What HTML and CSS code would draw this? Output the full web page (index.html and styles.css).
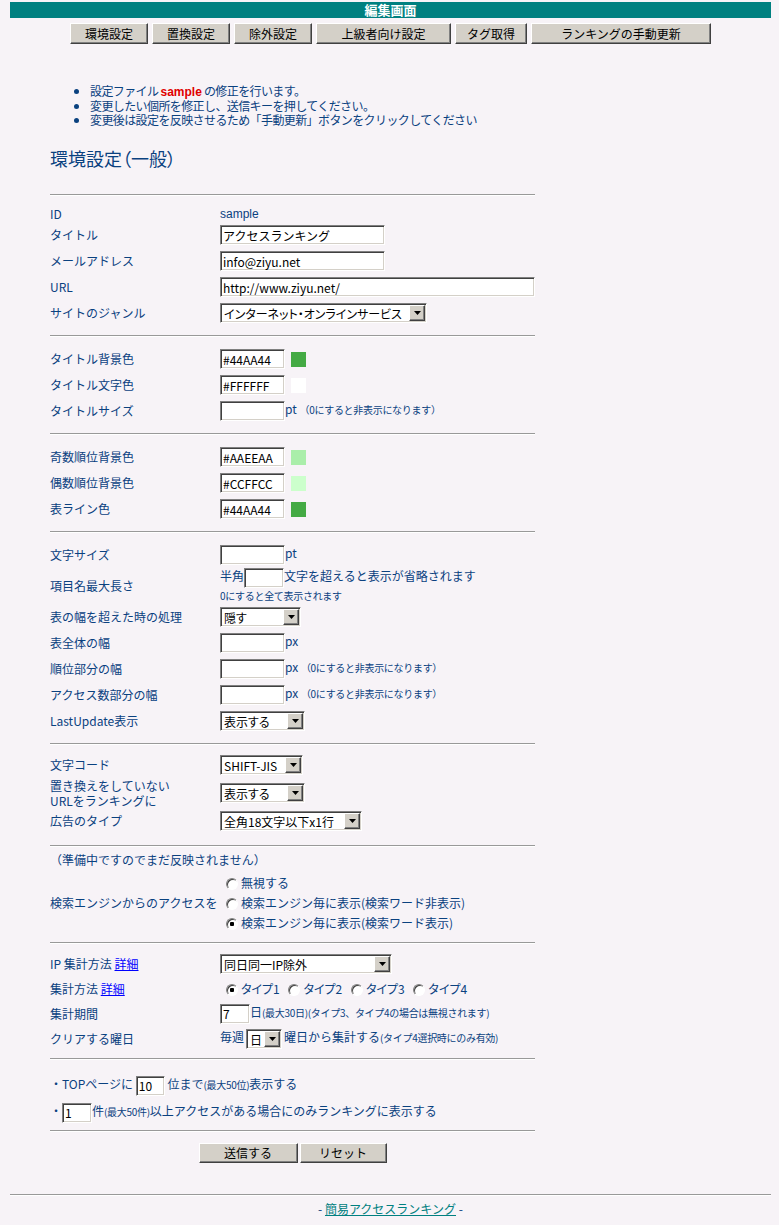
FILE: index.html
```html
<!DOCTYPE html>
<html lang="ja">
<head>
  <meta charset="UTF-8">
  <title>編集画面</title>
  <link rel="stylesheet" href="styles.css">
</head>
<body>

  <!-- タイトルバー -->
  <div class="titlebar">編集画面</div>

  <!-- メニュー -->
  <div class="tabs">
    <button class="btn">環境設定</button>
    <button class="btn">置換設定</button>
    <button class="btn">除外設定</button>
    <button class="btn">上級者向け設定</button>
    <button class="btn">タグ取得</button>
    <button class="btn">ランキングの手動更新</button>
  </div>

  <div class="main">
    <ul class="info">
      <li>設定ファイル <b class="fname">sample</b> の修正を行います。</li>
      <li>変更したい個所を修正し、送信キーを押してください。</li>
      <li>変更後は設定を反映させるため「手動更新」ボタンをクリックしてください</li>
    </ul>

    <h2>環境設定（一般）</h2>

    <form>
      <hr class="sep">
      <div class="sec">
        <table class="form">
          <tr class="h17"><td class="label">ID</td><td><span class="idval">sample</span></td></tr>
          <tr><td class="label">タイトル</td><td><input class="in in-text" type="text" value="アクセスランキング"></td></tr>
          <tr><td class="label">メールアドレス</td><td><input class="in in-text" type="text" value="info@ziyu.net"></td></tr>
          <tr><td class="label">URL</td><td><input class="in in-url" type="text" value="http://www.ziyu.net/"></td></tr>
          <tr><td class="label">サイトのジャンル</td><td>
            <span class="sel sel-genre"><select><option>インターネット・オンラインサービス</option></select><span class="arr"><svg width="7" height="4" viewBox="0 0 7 4"><path d="M0 0h7L3.5 4z" fill="#000"/></svg></span></span>
          </td></tr>
        </table>
      </div>

      <hr class="sep">
      <div class="sec">
        <table class="form">
          <tr><td class="label">タイトル背景色</td><td><input class="in in-color" type="text" value="#44AA44"><span class="swatch sw-green"></span></td></tr>
          <tr><td class="label">タイトル文字色</td><td><input class="in in-color" type="text" value="#FFFFFF"><span class="swatch sw-white"></span></td></tr>
          <tr><td class="label">タイトルサイズ</td><td><input class="in in-color" type="text">pt <span class="note">（0にすると非表示になります）</span></td></tr>
        </table>
      </div>

      <hr class="sep">
      <div class="sec">
        <table class="form">
          <tr><td class="label">奇数順位背景色</td><td><input class="in in-color" type="text" value="#AAEEAA"><span class="swatch sw-odd"></span></td></tr>
          <tr><td class="label">偶数順位背景色</td><td><input class="in in-color" type="text" value="#CCFFCC"><span class="swatch sw-even"></span></td></tr>
          <tr><td class="label">表ライン色</td><td><input class="in in-color" type="text" value="#44AA44"><span class="swatch sw-green"></span></td></tr>
        </table>
      </div>

      <hr class="sep">
      <div class="sec">
        <table class="form">
          <tr><td class="label">文字サイズ</td><td><input class="in in-color" type="text">pt</td></tr>
          <tr class="h36"><td class="label">項目名最大長さ</td><td>
            <div>半角<input class="in in-short" type="text">文字を超えると表示が省略されます</div>
            <div class="note">0にすると全て表示されます</div>
          </td></tr>
          <tr><td class="label">表の幅を超えた時の処理</td><td>
            <span class="sel sel-hide"><select><option>隠す</option></select><span class="arr"><svg width="7" height="4" viewBox="0 0 7 4"><path d="M0 0h7L3.5 4z" fill="#000"/></svg></span></span>
          </td></tr>
          <tr><td class="label">表全体の幅</td><td><input class="in in-color" type="text">px</td></tr>
          <tr><td class="label">順位部分の幅</td><td><input class="in in-color" type="text">px <span class="note">（0にすると非表示になります）</span></td></tr>
          <tr><td class="label">アクセス数部分の幅</td><td><input class="in in-color" type="text">px <span class="note">（0にすると非表示になります）</span></td></tr>
          <tr><td class="label">LastUpdate表示</td><td>
            <span class="sel sel-show"><select><option>表示する</option></select><span class="arr"><svg width="7" height="4" viewBox="0 0 7 4"><path d="M0 0h7L3.5 4z" fill="#000"/></svg></span></span>
          </td></tr>
        </table>
      </div>

      <hr class="sep">
      <div class="sec sec-code">
        <table class="form">
          <tr><td class="label">文字コード</td><td>
            <span class="sel sel-code"><select><option>SHIFT-JIS</option></select><span class="arr"><svg width="7" height="4" viewBox="0 0 7 4"><path d="M0 0h7L3.5 4z" fill="#000"/></svg></span></span>
          </td></tr>
          <tr class="h28"><td class="label two">置き換えをしていない<br>URLをランキングに</td><td>
            <span class="sel sel-show"><select><option>表示する</option></select><span class="arr"><svg width="7" height="4" viewBox="0 0 7 4"><path d="M0 0h7L3.5 4z" fill="#000"/></svg></span></span>
          </td></tr>
          <tr><td class="label">広告のタイプ</td><td>
            <span class="sel sel-ad"><select><option>全角18文字以下x1行</option></select><span class="arr"><svg width="7" height="4" viewBox="0 0 7 4"><path d="M0 0h7L3.5 4z" fill="#000"/></svg></span></span>
          </td></tr>
        </table>
      </div>

      <hr class="sep">
      <div class="sec sec-engine">
        <div class="pending">（準備中ですのでまだ反映されません）</div>
        <table class="form engine">
          <tr><td class="label" rowspan="3">検索エンジンからのアクセスを</td>
            <td><label><input class="radio" type="radio" name="engine">無視する</label></td></tr>
          <tr><td><label><input class="radio" type="radio" name="engine">検索エンジン毎に表示(検索ワード非表示)</label></td></tr>
          <tr><td><label><input class="radio" type="radio" name="engine" checked>検索エンジン毎に表示(検索ワード表示)</label></td></tr>
        </table>
      </div>

      <hr class="sep">
      <div class="sec sec-count">
        <table class="form">
          <tr><td class="label">IP 集計方法 <a href="#">詳細</a></td><td>
            <span class="sel sel-ip"><select><option>同日同一IP除外</option></select><span class="arr"><svg width="7" height="4" viewBox="0 0 7 4"><path d="M0 0h7L3.5 4z" fill="#000"/></svg></span></span>
          </td></tr>
          <tr><td class="label">集計方法 <a href="#">詳細</a></td><td class="types">
            <label><input class="radio" type="radio" name="type" checked>タイプ1</label>
            <label><input class="radio" type="radio" name="type">タイプ2</label>
            <label><input class="radio" type="radio" name="type">タイプ3</label>
            <label><input class="radio" type="radio" name="type">タイプ4</label>
          </td></tr>
          <tr><td class="label">集計期間</td><td><input class="in in-day" type="text" value="7">日<span class="note">(最大30日)(タイプ3、タイプ4の場合は無視されます)</span></td></tr>
          <tr><td class="label">クリアする曜日</td><td>毎週<span class="sel sel-day"><select><option>日</option></select><span class="arr"><svg width="7" height="4" viewBox="0 0 7 4"><path d="M0 0h7L3.5 4z" fill="#000"/></svg></span></span>曜日から集計する<span class="note">(タイプ4選択時にのみ有効)</span></td></tr>
        </table>
      </div>

      <hr class="sep">
      <div class="sec sec-top">
        <div class="line">・TOPページに <input class="in in-top" type="text" value="10"> 位まで<span class="note">(最大50位)</span>表示する</div>
        <div class="line">・<input class="in in-min" type="text" value="1">件<span class="note">(最大50件)</span>以上アクセスがある場合にのみランキングに表示する</div>
      </div>

      <hr class="sep">
      <div class="actions">
        <button class="btn btn-send" type="submit">送信する</button>
        <button class="btn btn-reset" type="reset">リセット</button>
      </div>
    </form>
  </div>

  <!-- フッター -->
  <hr class="sep">
  <p class="footer">- <a href="#">簡易アクセスランキング</a> -</p>

</body>
</html>
```

FILE: styles.css
```css
body {
  margin: 2px 8px 0 10px;
  background-color: #f7f3f7;
  color: #0a417f;
  font-family: "Noto Sans CJK JP", sans-serif;
  font-size: 12px;
}

.titlebar {
  background-color: #008080;
  color: #fff;
  font-weight: bold;
  font-size: 13px;
  text-align: center;
  height: 16px;
  line-height: 16px;
}

.tabs {
  display: flex;
  justify-content: center;
  gap: 4px;
  margin-top: 5px;
}

.btn {
  height: 21px;
  padding: 0;
  background-color: #d4d0c8;
  border: 1px solid;
  border-color: #fff #404040 #404040 #fff;
  box-shadow: inset -1px -1px #808080;
  color: #000;
  font-family: "Noto Sans CJK JP", sans-serif;
  font-size: 12px;
  line-height: 17px;
  cursor: pointer;
}

.tabs .btn:nth-child(1),
.tabs .btn:nth-child(2),
.tabs .btn:nth-child(3) { width: 78px; }
.tabs .btn:nth-child(4) { width: 135px; }
.tabs .btn:nth-child(5) { width: 72px; }
.tabs .btn:nth-child(6) { width: 180px; }

.main {
  margin-left: 40px;
  width: 485px;
}

.info {
  margin: 40px 0 0;
  padding-left: 40px;
  line-height: 14px;
  letter-spacing: -0.6px;
}

.fname {
  color: #e00000;
  font-family: "Liberation Sans", sans-serif;
  letter-spacing: 0;
}

h2 {
  margin: 19px 0 24px;
  font-size: 18px;
  font-weight: normal;
  line-height: 24px;
  font-feature-settings: "palt";
}

hr.sep {
  margin: 0;
  height: 0;
  border: none;
  border-top: 1px solid #999;
  border-bottom: 1px solid #fff;
}

.sec {
  padding: 9px 0;
}

.form {
  border-collapse: collapse;
  width: 100%;
}

.form tr { height: 26px; }
.form tr.h17 { height: 17px; }
.form tr.h28 { height: 28px; }
.form tr.h36 { height: 36px; }

.form td {
  padding: 0;
  vertical-align: middle;
  line-height: 16px;
  white-space: nowrap;
}

.form td.label {
  width: 170px;
}

.form td.two {
  line-height: 15px;
}

.idval {
  font-family: "Liberation Sans", sans-serif;
  font-size: 12px;
}

.note {
  font-size: 10px;
  letter-spacing: -0.3px;
}

.in {
  box-sizing: border-box;
  height: 20px;
  margin: 0;
  padding: 0 2px;
  vertical-align: middle;
  background: #fff;
  border: 1px solid;
  border-color: #808080 #fff #fff #808080;
  box-shadow: inset 1px 1px #404040, inset -1px -1px #d4d0c8;
  color: #000;
  font-family: "Noto Sans CJK JP", sans-serif;
  font-size: 12px;
  outline: none;
}

.in-text { width: 165px; }
.in-url { width: 315px; }
.in-color { width: 65px; }
.in-short { width: 40px; }
.in-day { width: 30px; }
.in-top { width: 29px; }
.in-min { width: 30px; }

.swatch {
  display: inline-block;
  width: 15px;
  height: 15px;
  margin-left: 6px;
  vertical-align: middle;
}

.sw-green { background-color: #44aa44; }
.sw-white { background-color: #ffffff; }
.sw-odd { background-color: #aaeeaa; }
.sw-even { background-color: #ccffcc; }

.sel {
  box-sizing: border-box;
  display: inline-flex;
  align-items: center;
  height: 20px;
  vertical-align: middle;
  background: #fff;
  border: 1px solid;
  border-color: #808080 #fff #fff #808080;
  box-shadow: inset 1px 1px #404040, inset -1px -1px #d4d0c8;
  padding: 1px;
}

.sel select {
  flex: 1;
  min-width: 0;
  height: 100%;
  appearance: none;
  -webkit-appearance: none;
  border: none;
  background: transparent;
  padding: 0 2px;
  color: #000;
  font-family: "Noto Sans CJK JP", sans-serif;
  font-size: 12px;
  font-feature-settings: "palt";
  outline: none;
}

.sel .arr {
  box-sizing: border-box;
  display: flex;
  align-items: center;
  justify-content: center;
  width: 16px;
  height: 16px;
  background-color: #d4d0c8;
  border: 1px solid;
  border-color: #fff #404040 #404040 #fff;
  box-shadow: inset -1px -1px #808080;
}

.sel-genre { width: 207px; }
.sel-hide { width: 81px; }
.sel-show { width: 85px; }
.sel-code { width: 83px; }
.sel-ad { width: 142px; }
.sel-ip { width: 172px; }
.sel-day { width: 36px; margin: 0 2px; }

.radio {
  appearance: none;
  -webkit-appearance: none;
  box-sizing: border-box;
  width: 12px;
  height: 12px;
  margin: 0 3px 0 6px;
  vertical-align: -2px;
  border-radius: 50%;
  background: #fff;
  border: 1px solid;
  border-color: #808080 #fff #fff #808080;
  box-shadow: inset 1px 1px #404040;
}

.radio:checked {
  background: radial-gradient(circle, #000 0 2px, #fff 2.5px);
}

.sec-code {
  padding: 7px 0 11px;
}

.sec-engine {
  padding: 4px 0 9px;
}

.pending {
  height: 18px;
  line-height: 18px;
}

.engine {
  margin-top: 4px;
}

.engine tr { height: 20px; }

.sec-count {
  padding: 7px 0;
}

.sec-count .form tr { height: 25px; }

.types {
  font-feature-settings: "palt";
}

.form a {
  color: #0000ff;
}

.sec-top {
  padding: 10px 0 6px;
}

.sec-top .line {
  height: 27px;
  line-height: 27px;
  white-space: nowrap;
}

.actions {
  display: flex;
  justify-content: center;
  gap: 2px;
  margin: 11px 0 31px;
}

.actions .btn {
  height: 20px;
  line-height: 16px;
}

.btn-send { width: 99px; }
.btn-reset { width: 87px; }

.footer {
  margin: 5px 0 0;
  line-height: 16px;
  text-align: center;
}

.footer a {
  color: #008080;
}
```
